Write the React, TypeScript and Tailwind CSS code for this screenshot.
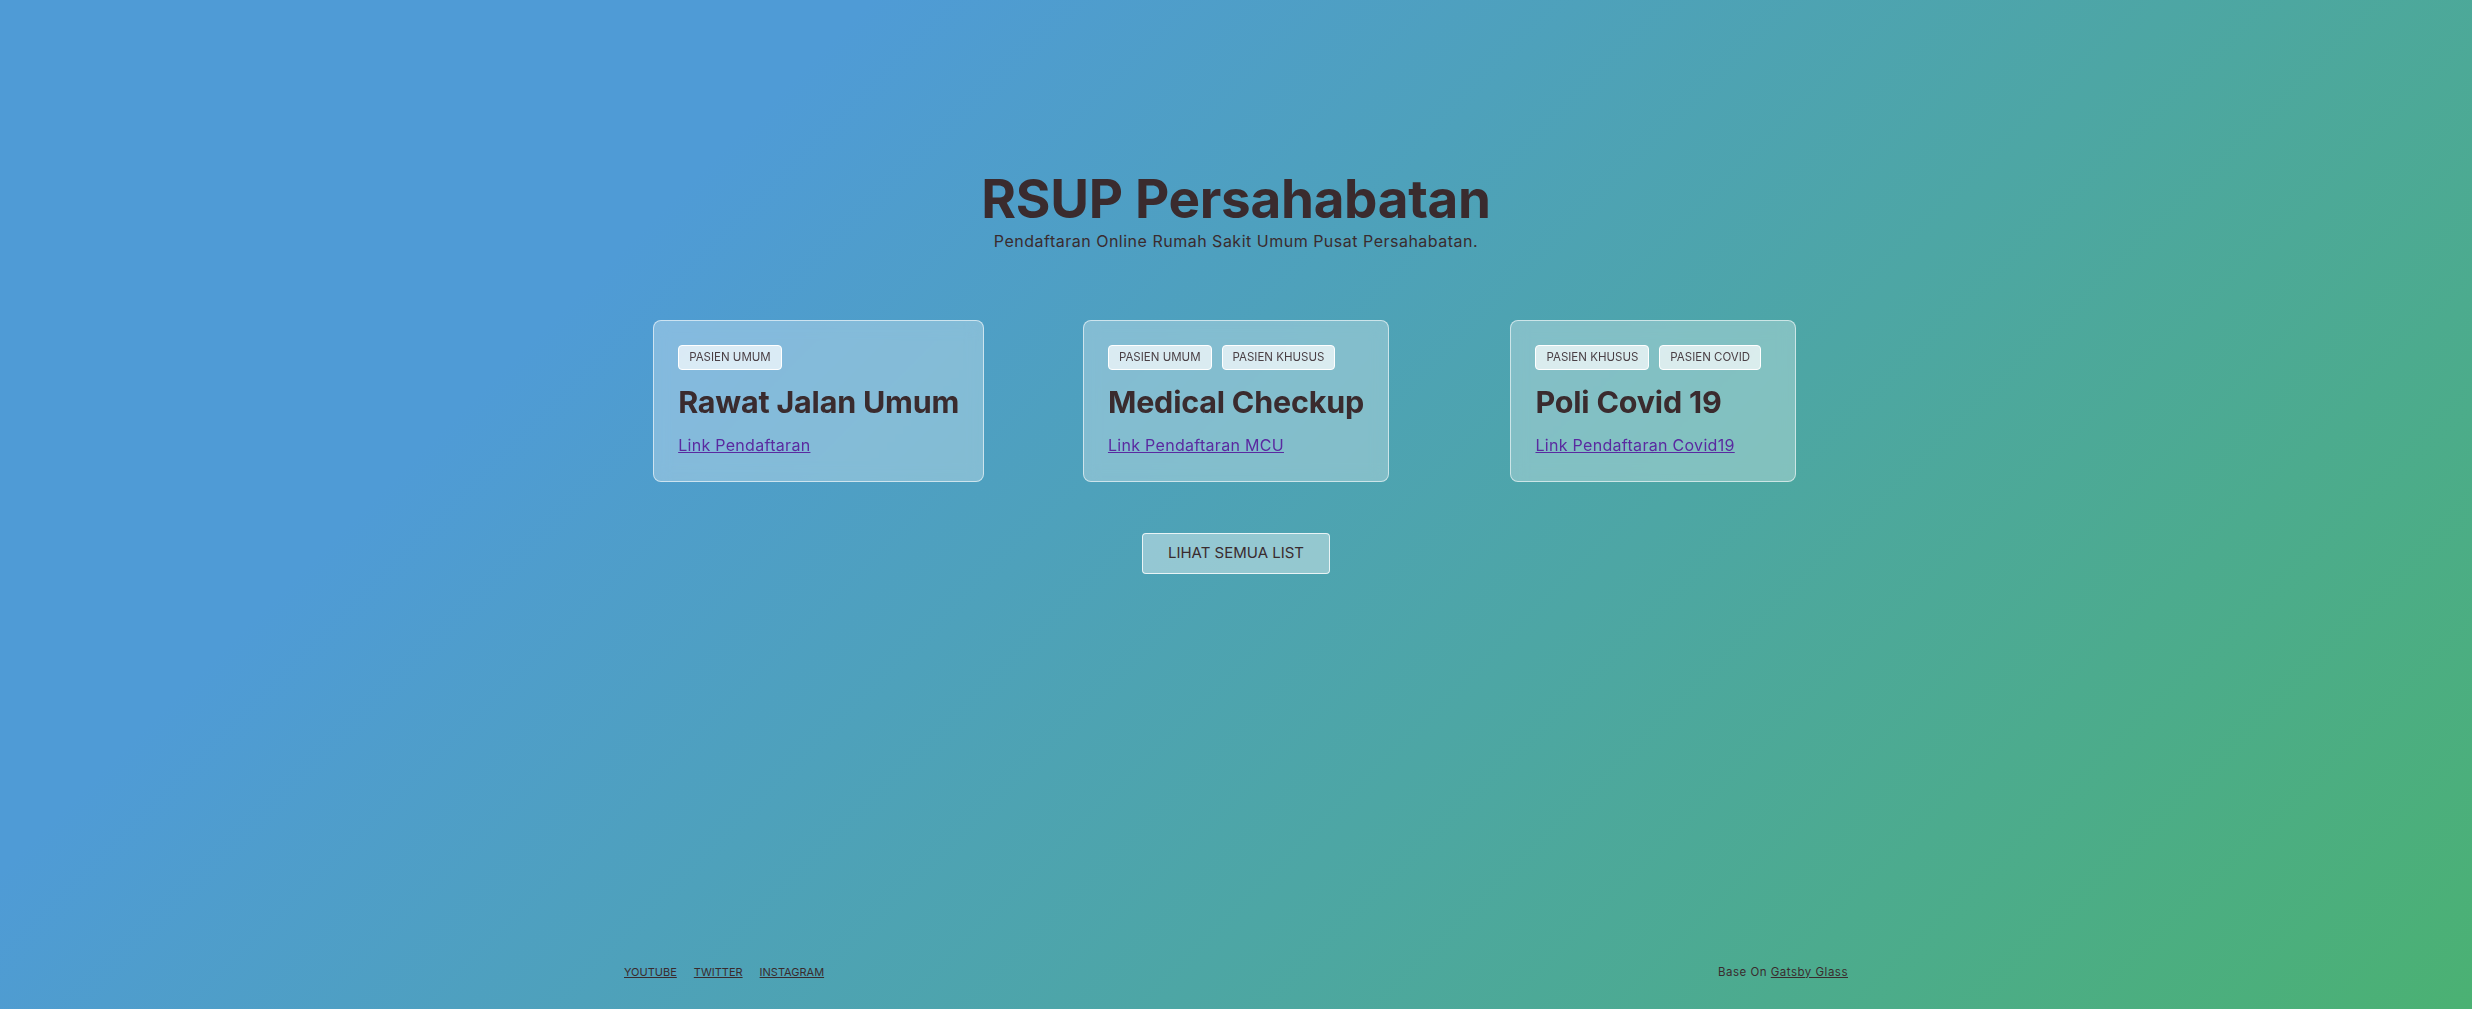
import React from "react";

const services = [
  {
    title: "Rawat Jalan Umum",
    tags: ["PASIEN UMUM"],
    link: "Link Pendaftaran",
  },
  {
    title: "Medical Checkup",
    tags: ["PASIEN UMUM", "PASIEN KHUSUS"],
    link: "Link Pendaftaran MCU",
  },
  {
    title: "Poli Covid 19",
    tags: ["PASIEN KHUSUS", "PASIEN COVID"],
    link: "Link Pendaftaran Covid19",
  },
];

const App = () => {
  return (
    <div className="min-h-screen flex flex-col bg-[linear-gradient(135deg,#4f9bd6_25%,#4bb173_100%)] font-['Inter',sans-serif] text-[#3a2b2e]">
      <main className="flex flex-col items-center pt-[167px]">
        <h1 className="text-[53px] leading-[64px] font-bold tracking-[-0.3px]">RSUP Persahabatan</h1>
        <p className="text-[16px] leading-5 tracking-[0.5px]">
          Pendaftaran Online Rumah Sakit Umum Pusat Persahabatan.
        </p>

        <div className="mt-[69px] w-[1252px] grid grid-cols-3 justify-items-center items-start">
          {services.map((s) => (
            <div
              key={s.title}
              className="rounded-lg border border-white/60 bg-white/30 px-6 pt-6 pb-6 backdrop-blur-sm"
            >
              <div className="flex">
                {s.tags.map((t) => (
                  <span
                    key={t}
                    className="mr-[10px] rounded border border-white bg-white/70 px-[10px] h-[25px] flex items-center text-[11.5px] text-[#4a3f44]"
                  >
                    {t}
                  </span>
                ))}
              </div>
              <h2 className="mt-3 text-[30.5px] leading-[40px] font-bold tracking-[-0.2px] whitespace-nowrap">{s.title}</h2>
              <a href="#" className="block mt-[11px] text-[16px] leading-6 tracking-[0.3px] text-[#5a2aa0] underline">
                {s.link}
              </a>
            </div>
          ))}
        </div>

        <button className="mt-[51px] h-[41px] px-[25px] rounded border border-white/80 bg-white/40 text-[15px] text-[#3a2b2e]">
          LIHAT SEMUA LIST
        </button>
      </main>

      <footer className="mt-auto mx-auto w-[1224px] flex justify-between items-center pb-[28px]">
        <div className="flex gap-[17px] text-[11px]">
          <a href="#" className="underline">YOUTUBE</a>
          <a href="#" className="underline">TWITTER</a>
          <a href="#" className="underline">INSTAGRAM</a>
        </div>
        <div className="text-[11.5px] tracking-[0.5px]">
          Base On <a href="#" className="underline">Gatsby Glass</a>
        </div>
      </footer>
    </div>
  );
};

export default App;
